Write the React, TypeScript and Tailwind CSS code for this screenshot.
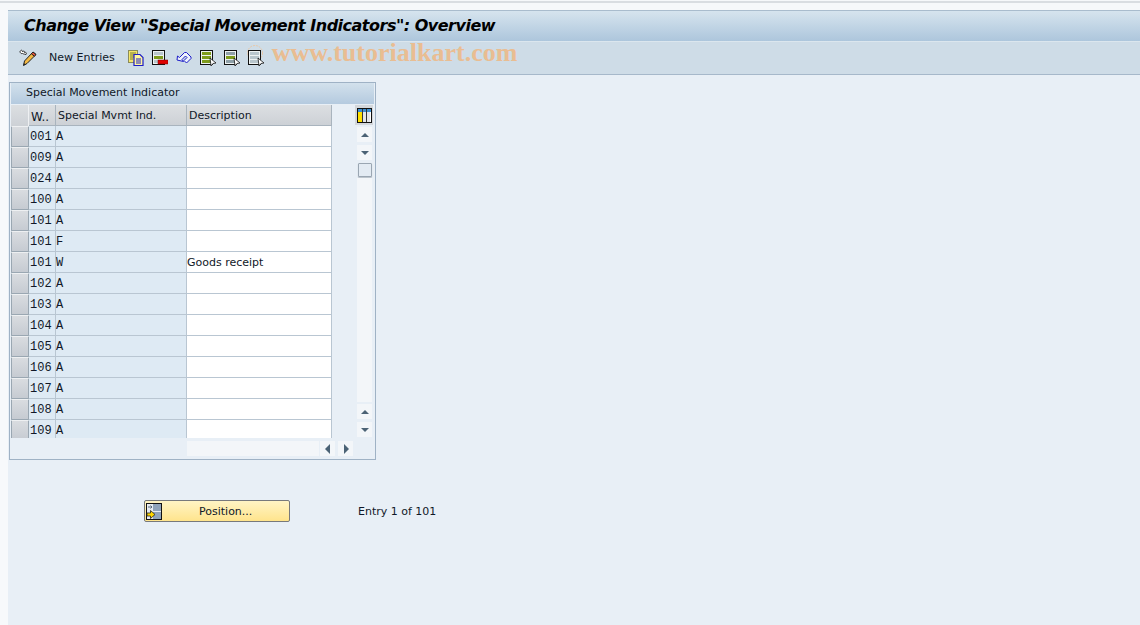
const rows: [string, string, string][] = [
  ["001", "A", ""],
  ["009", "A", ""],
  ["024", "A", ""],
  ["100", "A", ""],
  ["101", "A", ""],
  ["101", "F", ""],
  ["101", "W", "Goods receipt"],
  ["102", "A", ""],
  ["103", "A", ""],
  ["104", "A", ""],
  ["105", "A", ""],
  ["106", "A", ""],
  ["107", "A", ""],
  ["108", "A", ""],
  ["109", "A", ""],
];

const ui = "font-['DejaVu_Sans','Liberation_Sans',sans-serif]";

const PencilIcon = () => (
  <svg width="18" height="18" viewBox="0 0 18 18" className="shrink-0">
    <path d="M1 2.5 C2 0.5 3.5 1 3.5 3 C4.5 1.5 6 2 5.5 3.5 C7 3 8 4 7 5.5 C5.5 5 4 5 3.5 4.5 C2.5 5 1 4 1 2.5 Z" fill="#fff" stroke="#222" strokeWidth="0.9" />
    <path d="M14 3 L17 5.5 L8 14.5 L4.5 16.5 L5.5 12 Z" fill="#f5b942" stroke="#222" strokeWidth="1" />
    <path d="M14 3 L17 5.5 L15.3 7.2 L12.3 4.7 Z" fill="#e0533d" stroke="#222" strokeWidth="1" />
    <path d="M4.5 16.5 L4.9 14.2 L6.8 15.3 Z" fill="#222" />
  </svg>
);

const CopyIcon = () => (
  <svg width="16" height="16" viewBox="0 0 16 16" className="shrink-0">
    <rect x="0.5" y="0.5" width="9" height="12" fill="#f5e66a" stroke="#8b8b5a" />
    <path d="M2 3h6M2 5h6M2 7h6M2 9h3" stroke="#7a7a30" />
    <path d="M6 4.5h6l3 3v8H6z" fill="#fff6a0" stroke="#1c1cc8" strokeWidth="1.2" />
    <path d="M8 9h5M8 11h5M8 13h5" stroke="#1c1cc8" />
  </svg>
);

const DeleteIcon = () => (
  <svg width="16" height="16" viewBox="0 0 16 16" className="shrink-0">
    <rect x="0.5" y="0.5" width="12" height="14" fill="#eef2f2" stroke="#111" />
    <rect x="2" y="2" width="9" height="3" fill="#b9c6cc" />
    <rect x="2" y="6" width="9" height="3" fill="#7f9c1e" />
    <rect x="2" y="10" width="9" height="3" fill="#b9c6cc" />
    <rect x="6" y="10" width="10" height="4" fill="#e00000" stroke="#700" strokeWidth="0.5" />
  </svg>
);

const UndoIcon = () => (
  <svg width="16" height="16" viewBox="0 0 16 16" className="shrink-0">
    <path d="M1 10 L1.5 6 L3.5 7.5 L8.5 2.5 L10.5 2.5 L15 7 L15 8.5 L10.5 13 L8 10.5 L11 7.5 L9.5 6 L6 9.5 L7.5 11.5 Z" fill="#eef3fb" stroke="#1c1cc8" strokeWidth="1" />
  </svg>
);

const SelectIcon = ({ fill, top, ring }: { fill: string; top: string; ring?: boolean }) => (
  <svg width="16" height="17" viewBox="0 0 16 17" className="shrink-0 overflow-visible">
    {ring && <circle cx="7" cy="3" r="7.5" fill="none" stroke="#eac8a6" strokeWidth="1" strokeDasharray="2 1" />}
    <rect x="0.5" y="0.5" width="12" height="14" fill="#eef2f2" stroke="#111" />
    <rect x="2" y="2" width="9" height="3" fill={top} />
    <rect x="2" y="6" width="9" height="3" fill={fill} />
    <rect x="2" y="10" width="9" height="3" fill={top} />
    <path d="M10 8 L16 13 L13 13.5 L11 16 Z" fill="#fff" stroke="#111" strokeWidth="0.8" />
  </svg>
);

const Triangle = ({ dir }: { dir: "up" | "down" | "left" | "right" }) => {
  const points = {
    up: "1,7 9,7 5,3",
    down: "1,3 9,3 5,7",
    left: "7,0 7,10 2,5",
    right: "3,0 3,10 8,5",
  }[dir];
  return (
    <svg width="10" height="10" viewBox="0 0 10 10">
      <polygon points={points} fill="#4b6275" />
    </svg>
  );
};

const ScrollButton = ({ dir }: { dir: "up" | "down" | "left" | "right" }) => (
  <div className="w-[15px] h-[15px] shrink-0 bg-[#f3f6f9] flex items-center justify-center">
    <Triangle dir={dir} />
  </div>
);

const ColumnsIcon = () => (
  <svg width="15" height="15" viewBox="0 0 15 15">
    <rect x="0.5" y="0.5" width="14" height="14" fill="#fff" stroke="#111" />
    <rect x="1" y="1" width="13" height="3" fill="#3c8fd0" />
    <rect x="1" y="4" width="4" height="10" fill="#ffe000" />
    <rect x="6" y="4" width="3" height="10" fill="#e4e6e8" />
    <rect x="10" y="4" width="3" height="10" fill="#e4e6e8" />
    <path d="M5.5 1v13M9.5 1v13" stroke="#333" />
  </svg>
);

const PositionIcon = () => (
  <svg width="16" height="17" viewBox="0 0 16 17" className="shrink-0">
    <rect x="0.5" y="0.5" width="15" height="16" fill="#e6ebf1" stroke="#111" />
    <rect x="7" y="1" width="8" height="7" fill="#8fa3bb" />
    <rect x="7" y="9" width="8" height="7" fill="#8fa3bb" />
    <path d="M2 4h4M4.5 2.5L6 4 4.5 5.5" fill="none" stroke="#5a6b7d" />
    <path d="M1 10h3.5V7.5L9 11.5 4.5 15.5V13H1z" fill="#ffd800" stroke="#222" strokeWidth="0.8" />
  </svg>
);

export default function App() {
  return (
    <div className={`w-[1140px] h-[625px] overflow-hidden bg-[#f7f9fb] flex flex-col ${ui}`}>
      <div className="h-[10px] shrink-0 bg-[#f6f8fa] pt-px">
        <div className="h-[2px] bg-[#d9dde1]" />
      </div>

      <div className="flex-1 ml-2 flex flex-col bg-[#e8eff6]">
        <div className="h-[31px] shrink-0 flex items-center pl-[16px] pb-px bg-gradient-to-b from-[#d6e4ee] to-[#adc6dc] border-t border-[#a9bccd]">
          <span className="font-['DejaVu_Sans',sans-serif] font-bold italic text-[16px] tracking-[-0.5px] text-black whitespace-nowrap">
            Change View "Special Movement Indicators": Overview
          </span>
        </div>

        <div className="h-[34px] shrink-0 flex items-center pl-[11px] bg-[#cedce7] border-t border-[#dbe6ee] border-b border-b-[#a6b8ca]">
          <PencilIcon />
          <span className="ml-[12px] text-[11px] text-[#101828] whitespace-nowrap">New Entries</span>
          <div className="ml-[13px] flex items-center gap-[8px]">
            <CopyIcon />
            <DeleteIcon />
            <UndoIcon />
            <SelectIcon fill="#7f9c1e" top="#7f9c1e" />
            <SelectIcon fill="#7f9c1e" top="#8fa0a8" />
            <SelectIcon fill="#b9c6cc" top="#b9c6cc" ring />
          </div>
          <span className="ml-[8px] mb-[10px] font-['Liberation_Serif',serif] font-bold text-[26px] leading-none text-[#e9bd92] whitespace-nowrap">
            www.tutorialkart.com
          </span>
        </div>

        <div className="pl-px pt-[7px]">
          <div className="w-[367px] h-[378px] border border-[#9fb2c5] flex flex-col">
            <div className="h-[21px] shrink-0 flex items-center pl-[15px] mb-px text-[11px] text-[#101828] bg-gradient-to-b from-[#d3e1ec] to-[#b4cadf] mx-px">
              Special Movement Indicator
            </div>

            <div className="flex flex-1 min-h-0 pl-px">
              <div className="w-[321px] shrink-0">
                <div className="h-[21px] flex text-[11px] text-[#101828]">
                  <div className="w-[18px] bg-gradient-to-b from-[#dcdfe2] to-[#cdd1d6] border-r border-[#eef0f2]" />
                  <div className="w-[27px] pl-[2px] pt-[3px] bg-gradient-to-b from-[#dcdfe2] to-[#cdd1d6] border-r border-b border-[#a9b4be] whitespace-nowrap flex items-center text-[12px]">W..</div>
                  <div className="w-[131px] pl-[2px] pt-[3px] bg-gradient-to-b from-[#dcdfe2] to-[#cdd1d6] border-r border-b border-[#a9b4be] whitespace-nowrap flex items-center">Special Mvmt Ind.</div>
                  <div className="w-[145px] pl-[2px] pt-[3px] bg-gradient-to-b from-[#dcdfe2] to-[#cdd1d6] border-r border-b border-[#a9b4be] whitespace-nowrap flex items-center">Description</div>
                </div>
                <div className="h-[312px] overflow-hidden">
                  {rows.map((row, i) => (
                    <div key={i} className="h-[21px] flex text-[11px] text-[#101828]">
                      <div className="w-[18px] rounded-[1px] bg-gradient-to-b from-[#d9dce0] to-[#c6cbd2] border border-[#9aa7b2] border-t-[#eef0f2]" />
                      <div className="w-[27px] pl-px bg-[#deeaf4] border-r border-b border-[#b9c6d2] font-['Liberation_Mono',monospace] text-[12px] leading-[22px]">{row[0]}</div>
                      <div className="w-[131px] bg-[#deeaf4] border-r border-b border-[#b9c6d2] font-['Liberation_Mono',monospace] text-[12px] leading-[22px]">{row[1]}</div>
                      <div className="w-[145px] bg-white border-r border-b border-[#b9c6d2] whitespace-nowrap leading-[22px]">{row[2]}</div>
                    </div>
                  ))}
                </div>
                <div className="flex items-center mt-[3px] pl-[176px]">
                  <div className="w-[132px] h-[15px] shrink-0 bg-[#f3f6f9]" />
                  <div className="ml-[1px] shrink-0"><ScrollButton dir="left" /></div>
                  <div className="ml-[3px] shrink-0"><ScrollButton dir="right" /></div>
                </div>
              </div>

              <div className="w-[18px] ml-[23px] shrink-0 flex flex-col">
                <div className="h-[20px] w-[18px] bg-[#d3d7db] flex items-center pl-[2px]">
                  <ColumnsIcon />
                </div>
                <div className="pl-[2px] mt-[2px] flex flex-col">
                  <ScrollButton dir="up" />
                  <div className="h-[3px]" />
                  <ScrollButton dir="down" />
                  <div className="h-[3px]" />
                  <div className="w-[14px] h-[14px] ml-px rounded-[1px] bg-[#e3ebf3] border border-[#9aa6b2] shadow-[0_1px_1px_#b7c0c9]" />
                  <div className="w-[15px] h-[224px] mt-px bg-[#f3f6f9]" />
                  <div className="h-[2px]" />
                  <ScrollButton dir="up" />
                  <div className="h-[3px]" />
                  <ScrollButton dir="down" />
                </div>
              </div>
            </div>
          </div>
        </div>

        <div className="mt-[40px] flex items-center">
          <button className="ml-[136px] w-[146px] h-[22px] rounded-[2px] border border-[#77797c] bg-gradient-to-b from-[#fff4c4] to-[#ffe48c] flex items-center pl-px text-[11px] text-[#101828]">
            <PositionIcon />
            <span className="ml-[37px] pt-[2px]">Position...</span>
          </button>
          <span className="ml-[68px] pt-[2px] text-[11px] text-[#101828] whitespace-nowrap">Entry 1 of 101</span>
        </div>
      </div>
    </div>
  );
}
